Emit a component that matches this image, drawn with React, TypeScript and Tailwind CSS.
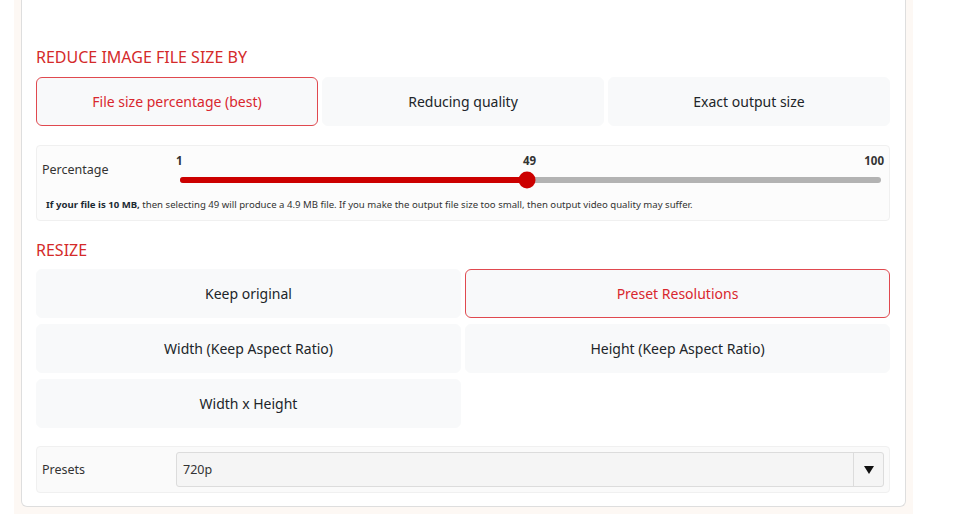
const sizeModes = ["File size percentage (best)", "Reducing quality", "Exact output size"];
const resizeModes = ["Keep original", "Preset Resolutions", "Width (Keep Aspect Ratio)", "Height (Keep Aspect Ratio)", "Width x Height"];

function OptionButton({ label, active }: { label: string; active?: boolean }) {
  return (
    <button
      className={
        "flex h-[49px] items-center justify-center rounded-[6px] border bg-[#f8f9fa] text-[14px] " +
        (active ? "border-[#e0494f] text-[#d9272e]" : "border-[#f8f9fa] text-[#212529]")
      }
    >
      {label}
    </button>
  );
}

export default function App() {
  const value = 49;
  const pct = (value / 99) * 100;

  return (
    <div className="min-h-[514px] w-[975px] bg-white font-['Noto_Sans',sans-serif]">
      <div className="ml-[14px] w-[899px] bg-[#fdf8f4] px-[7px] pb-[8px]">
        <div className="rounded-b-[6px] border-x border-b border-[#dedede] bg-white pb-[13px] pl-[14px] pr-[15px] pt-[44px]">
          <h2 className="text-[16px] leading-[26px] text-[#d42a2a]">REDUCE IMAGE FILE SIZE BY</h2>
          <div className="mt-[7px] grid grid-cols-3 gap-[4px]">
            {sizeModes.map((m, i) => (
              <OptionButton key={m} label={m} active={i === 0} />
            ))}
          </div>

          <div className="mt-[19px] rounded-[4px] border border-[#f0f0f0] bg-[#fcfcfc] px-[5px] pb-[8px] pt-[6px]">
            <div className="flex items-start">
              <div className="w-[138px] pt-[9px] text-[12.5px] text-[#333]">Percentage</div>
              <div className="flex-1">
                <div className="relative h-[16px] text-[11.5px] font-bold text-[#333]">
                  <span className="absolute left-[-4px]">1</span>
                  <span className="absolute left-[343px]">49</span>
                  <span className="absolute right-0">100</span>
                </div>
                <div className="relative mt-[9px] mr-[3px] h-[6px] rounded-full bg-[#b3b3b3]">
                  <div className="h-full rounded-l-full bg-[#cc0000]" style={{ width: `${pct}%` }} />
                  <div
                    className="absolute top-1/2 h-[17px] w-[17px] -translate-x-1/2 -translate-y-1/2 rounded-full bg-[#cc0000]"
                    style={{ left: `${pct}%` }}
                  />
                </div>
              </div>
            </div>
            <p className="mt-[15px] pl-[4px] text-[9.6px] text-[#333]">
              <span className="font-bold text-[#1d2a33]">If your file is 10 MB,</span> then selecting 49 will produce a 4.9 MB file. If you make the output file size too small, then output video quality may suffer.
            </p>
          </div>

          <h2 className="mt-[16px] text-[16px] leading-[26px] text-[#d42a2a]">RESIZE</h2>
          <div className="mt-[6px] grid grid-cols-2 gap-x-[4px] gap-y-[6px]">
            {resizeModes.map((m) => (
              <OptionButton key={m} label={m} active={m === "Preset Resolutions"} />
            ))}
          </div>

          <div className="mt-[18px] flex items-center rounded-[4px] border border-[#f0f0f0] bg-[#fafafa] px-[5px] py-[5px]">
            <div className="w-[134px] text-[12.5px] text-[#333]">Presets</div>
            <div className="flex h-[35px] flex-1 items-stretch rounded-[3px] border border-[#dcdcdc] bg-[#f5f5f5]">
              <div className="flex flex-1 items-center pl-[6px] text-[12.5px] text-[#333]">720p</div>
              <div className="flex w-[30px] items-center justify-center border-l border-[#dcdcdc]">
                <svg width="10" height="8" viewBox="0 0 10 8">
                  <path d="M0 0 H10 L5 8 Z" fill="#111" />
                </svg>
              </div>
            </div>
          </div>
        </div>
      </div>
    </div>
  );
}
